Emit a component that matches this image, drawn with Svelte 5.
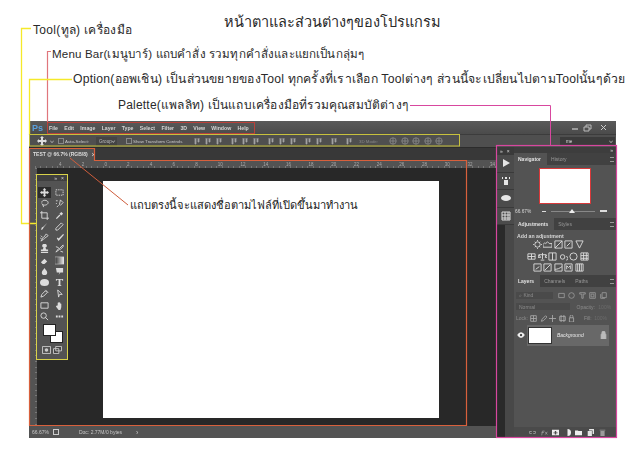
<script>
  const menus = ['File','Edit','Image','Layer','Type','Select','Filter','3D','View','Window','Help'];
  const rulerNums = [4,2,0,2,4,6,8,10,12,14,16,18,20,22,24,26,28,30,32,34];
  const tools = [
    {d:'M5 0l2 2H6v2h2V3l2 2-2 2V6H6v2h1l-2 2-2-2h1V6H2v1L0 5l2-2v1h2V2H3z',f:1},
    {d:'M1 2h8v6H1z',dash:1},
    {d:'M2 4c0-4 7-3 7 0s-6 4-7 1M3 6l1 3'},
    {d:'M6 1l3 3-3 3-1-1zM4 7L2 9M1 2h2M1 5h1',},
    {d:'M2 0v8h8M0 2h8v8'},
    {d:'M2 9l-1-1 4-4 1 1zM5 3l2-2 2 2-2 2z',f:1},
    {d:'M8 1L4 6l-1 2-2 1 1-3 2-1z',f:1},
    {d:'M7 1l2 2-6 6H1V7z'},
    {d:'M7 1l2 2-4 3-1-1zM1 9l2-3 1 1zM1 3l2 2M0 5l2 2'},
    {d:'M9 1L4 6 3 5 2 6l2 3 6-7z',f:1},
    {d:'M5 0a2 2 0 0 1 1 4l1 2h2v2H1V6h2l1-2a2 2 0 0 1 1-4zM1 9h8v1H1z',f:1},
    {d:'M9 1L5 5l1 1 3-3zM1 9l3-4 1 1zM1 3l3 1M6 8l3 1'},
    {d:'M1 7l4-4 3 3-3 3H3zM3 5l3 3',f:1},
    {d:'M0 1h10v8H0z',grad:1},
    {d:'M5 1c1 2 3 3 3 5a3 3 0 0 1-6 0c0-2 2-3 3-5z',f:1},
    {d:'M1 1h8v5H6L4 9 5 6H2z',f:1},
    {d:'M0 5a5 4 0 1 0 10 0a5 4 0 1 0-10 0z',f:1},
    {d:'M1 1h8v2H8V2H6v6h1v1H3V8h1V2H2v1H1z',f:1},
    {d:'M1 9l1-3 4-4 2 2-4 4zM6 1l3 3'},
    {d:'M3 1l5 5H5l-1 3z'},
    {d:'M1 2h8v6H1z'},
    {d:'M3 5V2h1v3-4h1v4-3h1v3-2h1v4l-1 3H4L1 6l1-1z',f:1},
    {d:'M4 1a3 3 0 1 1 0 6a3 3 0 1 1 0-6M6 6l3 3'},
    {d:'M1 4h2v2H1zM4 4h2v2H4zM7 4h2v2H7z',f:1}
  ];
  const adjust = [
    [ 'M5 2a3 3 0 1 1 0 6a3 3 0 1 1 0-6M5 0v1M5 9v1M0 5h1M9 5h1M2 2l1 1M7 7l1 1M8 2L7 3M2 8l1-1',
      'M0 8V5l2-2 1 1 2-2 2 2 3 0v4z','M1 1h8v8H1zM1 9l8-8','M1 1h8v8H1zM3 7l4-4','M1 1h8L5 9z' ],
    [ 'M1 2h8v6H1zM5 2v6M1 5h8','M5 1v7M1 3h8M1 3l-1 3h3zM9 3l-1 3h3zM3 9h4','M1 1h8v8H1zM5 1v8','M4 3a2.500 2.500 0 1 1 0 5a2.500 2.500 0 1 1 0-5M8 5a1.500 1.500 0 1 1 0 4','M5 1a4 4 0 1 1 0 8a4 4 0 1 1 0-8','M1 1h8v8H1zM1 4h8M1 7h8M4 1v8M7 1v8' ],
    [ 'M1 1h8v8H1zM3 7l4-3','M1 1h8v8H1zM2 8l6-6','M1 1h8v8H1zM1 7c3 0 5-1 8-3','M1 1h8v8H1zM3 7V3l2 2 2-2v4','M1 1h8v8H1zM3 1v8M5 1v8M7 1v8' ]
  ];
  const optIconsA = [0,1,2,3,4,5,6,7,8,9,10,11,12];
  const gapAt = [3,6,9,11,12];
  const opt3d = [394,406,418,430,441];
  const rails = ['M2 1l7 4-7 4z','M4 1h2v2H4zM3 4h4v5H3zM1 1h1v2H1zM8 1h1v2H8z','M0 5a5 3 0 1 0 10 0a5 3 0 1 0-10 0z','M1 1h8v8H1zM1 4h8M1 7h8M4 1v8M7 1v8'];
  const layerTools = ['M1 2h8v6H1z','M5 1a4 4 0 1 1 0 8a4 4 0 1 1 0-8z','M1 1h8v2H6v6H4V3H1z','M1 1h8v8H1zM3 3h4v4H3z','M3 1h6v7H3zM1 3v6h6'];
  const lockTools = ['M1 1h8v8H1zM1 5h8M5 1v8','M8 1L3 6 2 9l3-1 5-5z','M5 0v10M0 5h10','M1 2h8v6H1zM3 0v10M7 0v10','M2 4h6v6H2zM3 4V2a2 2 0 0 1 4 0v2'];
  const footer = [
    {d:'M0 5a2 2 0 0 1 2-2h2v1H2a1 1 0 0 0 0 2h2v1H2a2 2 0 0 1-2-2zM10 5a2 2 0 0 0-2-2H6v1h2a1 1 0 0 1 0 2H6v1h2a2 2 0 0 0 2-2z',o:.55},
    {d:'M1 9l1-6h3M1 5h3M6 4l3 4M9 4L6 8',o:.55,line:1},
    {d:'M0 1h10v8H0zM4 3v2H2v1h2v2h2V6h2V5H6V3z',o:1},
    {d:'M5 0a5 5 0 1 1 0 10V0z',o:1},
    {d:'M0 2h4l1 1h5v6H0z',o:1},
    {d:'M1 3h6v7H1zM3 0h7v7H8V2H3z',o:.95},
    {d:'M2 3h6v7H2zM1 1h8v1H1z',o:.5}
  ];
</script>

<main class="page">
  <h1 class="note title">หน้าตาและส่วนต่างๆของโปรแกรม</h1>
  <p class="note tool-note">Tool(ทูล) เครื่องมือ</p>
  <p class="note menu-note">Menu Bar(เมนูบาร์) แถบคำสั่ง รวมทุกคำสั่งและแยกเป็นกลุ่มๆ</p>
  <p class="note option-note">Option(ออพเชิน) เป็นส่วนขยายของTool ทุกครั้งที่เราเลือก Toolต่างๆ ส่วนนี้จะเปลี่ยนไปตามToolนั้นๆด้วย</p>
  <p class="note palette-note">Palette(แพลลิท) เป็นแถบเครื่องมือที่รวมคุณสมบัติต่างๆ</p>

  <section class="window">
    <div class="menubar">
      <b class="ps">Ps</b>
      <nav class="menus">{#each menus as m}<span>{m}</span>{/each}</nav>
      <div class="winctl">
        <svg width="40" height="8" viewBox="0 0 40 8"><path d="M2 5h6" stroke="#ccc" stroke-width="1.200"/><path d="M14 3h5v4h-5zM16 3V1h5v4h-2" fill="none" stroke="#bbb"/><path d="M31 1l5 5M36 1l-5 5" stroke="#ccc"/></svg>
      </div>
    </div>

    <div class="options">
      <svg class="mv" width="10" height="10" viewBox="0 0 10 10"><path fill="#ddd" d={tools[0].d}/></svg>
      <span class="caret"></span>
      <i class="check"></i><span class="otext auto">Auto-Select:</span>
      <span class="select group">Group<span class="caret"></span></span>
      <i class="check"></i><span class="otext show">Show Transform Controls</span>
      <div class="align">
        {#each optIconsA as i}
          <svg width="6" height="7" viewBox="0 0 6 7" class:gap={gapAt.includes(i)}><path d="M0 0h6M1 1h1v5H1zM4 1h1v3H4z" stroke="#aaa" stroke-width=".7" fill="#999"/></svg>
        {/each}
      </div>
      <span class="otext mode">3D Mode:</span>
      <div class="modes">
        {#each opt3d as _}
          <svg width="8" height="8" viewBox="0 0 10 10"><path d="M5 1a4 4 0 1 1 0 8a4 4 0 1 1 0-8M1 5h8M5 1v8" fill="none" stroke="#8d8d8d"/></svg>
        {/each}
      </div>
      <span class="select workspace">me<span class="caret"></span></span>
    </div>

    <div class="body">
      <div class="doc">
        <div class="tabbar"><span class="tab">TEST @ 66.7% (RGB/8)<em>×</em></span></div>
        <div class="ruler-top">
          {#each rulerNums as n}<span>{n}</span>{/each}
        </div>
        <div class="doc-mid">
          <div class="ruler-left"></div>
          <div class="canvas"><div class="sheet"></div></div>
          <aside class="toolbox">
            <div class="tb-head"><span>»</span><span>×</span></div>
            <div class="tb-grid">
              {#each tools as t, i}
                <span class="tool" class:active={i === 0}>
                  <svg width="9" height="9" viewBox="0 0 10 10">
                    {#if t.grad}
                      <defs><linearGradient id="g"><stop offset="0" stop-color="#333"/><stop offset="1" stop-color="#eee"/></linearGradient></defs>
                      <path d={t.d} fill="url(#g)" stroke="#ccc" stroke-width=".6"/>
                    {:else if t.f}
                      <path d={t.d} fill="#dcdcdc"/>
                    {:else}
                      <path d={t.d} fill="none" stroke="#dcdcdc" stroke-width="1" stroke-dasharray={t.dash ? '1.500 1' : 'none'}/>
                    {/if}
                  </svg>
                </span>
              {/each}
            </div>
            <div class="swatches"><i class="fg"></i><i class="bg"></i></div>
            <div class="tb-bottom">
              <svg width="9" height="8" viewBox="0 0 10 9"><path d="M0.500 0.500h9v8h-9z" fill="none" stroke="#ccc"/><circle cx="5" cy="4.500" r="2" fill="#ccc"/></svg>
              <svg width="9" height="8" viewBox="0 0 10 9"><path d="M3 .5h6.500v5H3zM.5 3h6v5.500h-6z" fill="#444" stroke="#ccc"/></svg>
            </div>
          </aside>
        </div>
        <div class="status"><span>66.67%</span><span class="st-ico"></span><span class="st-doc">Doc: 2.77M/0 bytes</span><span class="st-arrow">›</span></div>
      </div>

      <div class="dock">
        <div class="rail">
          <div class="rail-head"><span>»</span><span>×</span></div>
          {#each rails as d, i}
            <span class="rail-btn">
              <svg width="10" height="10" viewBox="0 0 10 10"><path {d} fill={i === 3 ? 'none' : '#e6e6e6'} stroke={i === 3 ? '#ddd' : 'none'}/></svg>
            </span>
          {/each}
        </div>
        <div class="panels">
          <div class="panel-top"><span>»</span></div>
          <div class="tabs"><span class="on">Navigator</span><span>History</span><i class="burger"></i></div>
          <div class="navigator">
            <div class="preview"></div>
            <div class="zoomrow">
              <span class="pct">66.67%</span>
              <i class="minus"></i>
              <span class="slider"><i class="thumb"></i></span>
              <i class="plus"></i>
            </div>
          </div>
          <div class="tabs"><span class="on">Adjustments</span><span>Styles</span><i class="burger"></i></div>
          <div class="adjust">
            <div class="adj-title">Add an adjustment</div>
            {#each adjust as row}
              <div class="adj-row">
                {#each row as d}
                  <svg width="9" height="9" viewBox="0 0 10 10"><path {d} fill="none" stroke="#dedede" stroke-width="1"/></svg>
                {/each}
              </div>
            {/each}
          </div>
          <div class="tabs"><span class="on">Layers</span><span>Channels</span><span>Paths</span><i class="burger"></i></div>
          <div class="layers">
            <div class="lrow"><span class="field kind">⌕ Kind</span>
              {#each layerTools as d}<svg width="7" height="7" viewBox="0 0 10 10"><path {d} fill="none" stroke="#999" stroke-width="1.200"/></svg>{/each}
            </div>
            <div class="lrow"><span class="field normal">Normal</span><span class="dim">Opacity:</span><span class="dim faint">100%</span></div>
            <div class="lrow lockrow"><span class="dim">Lock:</span>
              {#each lockTools as d}<svg width="7" height="7" viewBox="0 0 10 10"><path {d} fill="none" stroke="#aaa" stroke-width="1.200"/></svg>{/each}
              <span class="dim fill">Fill:</span><span class="dim faint">100%</span>
            </div>
            <div class="layer">
              <span class="eye"><svg width="8" height="6" viewBox="0 0 10 8"><path d="M0 4c3-5 7-5 10 0c-3 5-7 5-10 0z" fill="#eee"/><circle cx="5" cy="4" r="1.500" fill="#333"/></svg></span>
              <div class="layer-body">
                <i class="thumbnail"></i>
                <span class="lname">Background</span>
                <svg width="7" height="8" viewBox="0 0 8 10"><path d="M1 4h6v6H1zM2 4V2a2 2 0 0 1 4 0v2" fill="#bbb" stroke="#bbb"/></svg>
              </div>
            </div>
            <div class="lfooter">
              {#each footer as f}
                <svg width="7" height="7" viewBox="0 0 10 10" style:opacity={f.o}><path d={f.d} fill={f.line ? 'none' : '#eee'} stroke={f.line ? '#eee' : 'none'}/></svg>
              {/each}
            </div>
          </div>
        </div>
      </div>
    </div>
  </section>

  <p class="note doc-note">แถบตรงนี้จะแสดงชื่อตามไฟล์ที่เปิดขึ้นมาทำงาน</p>

  <svg class="callouts" width="640" height="452" viewBox="0 0 640 452" fill="none">
    <path d="M31 28.500H21.500V223.500H36" stroke="#f5e92a" stroke-width="1.300"/>
    <path d="M51 51.500H47.500V122" stroke="#e0767c" stroke-width="1.200"/>
    <path d="M72 79.500H29.500V135" stroke="#f5e92a" stroke-width="1.300"/>
    <path d="M410 105.500H550.500V145" stroke="#d8479f"/>
    <rect x="47.500" y="122.500" width="207" height="11" stroke="#b9413a"/>
    <rect x="29.500" y="134.500" width="430" height="11.500" stroke="#c7c13d"/>
    <path d="M29.500 148.500H94.500V160.500H466.500V425.500H29.500Z" stroke="#d8603c" stroke-width="1.200"/>
    <rect x="36.500" y="174.500" width="31" height="185" stroke="#d8d24a"/>
    <rect x="496.500" y="145.500" width="120" height="292" stroke="#d8479f" stroke-width="1.200"/>
    <path d="M70 158L128 205" stroke="#cf5d3c"/>
  </svg>
</main>

<style>
  :global(body) { margin: 0; background: #fff; }
  .page {
    position: relative;
    width: 640px;
    height: 452px;
    overflow: hidden;
    background: #fff;
    font-family: "Liberation Sans", Arial, sans-serif;
    padding-top: 121px;
    box-sizing: border-box;
  }
  .note {
    position: absolute;
    margin: 0;
    color: #2a2a2a;
    font-weight: 400;
    white-space: nowrap;
    line-height: 1.2;
  }
  .title { left: 224px; top: 14px; font-size: 14.500px; }
  .tool-note { left: 33px; top: 23px; font-size: 12px; letter-spacing: .3px; }
  .menu-note { left: 52px; top: 47px; font-size: 11.600px; letter-spacing: .15px; }
  .option-note { left: 73px; top: 72px; font-size: 12.200px; letter-spacing: .23px; }
  .palette-note { left: 118px; top: 98px; font-size: 12px; letter-spacing: .2px; }
  .doc-note { left: 130px; top: 199px; font-size: 11.100px; color: #1c1c1c; }
  .callouts { position: absolute; left: 0; top: 0; pointer-events: none; }

  .window {
    margin-left: 29px;
    width: 587px;
    height: 317px;
    display: flex;
    flex-direction: column;
    background: #535353;
    color: #d8d8d8;
    font-size: 5.500px;
    filter: blur(.3px);
  }
  .menubar {
    height: 13px;
    display: flex;
    align-items: center;
    background: linear-gradient(#5a5a5a, #4b4b4b);
    padding-left: 3px;
  }
  .ps { color: #5aa0dc; font-size: 9px; width: 17px; }
  .menus { display: flex; gap: 6.300px; font-size: 5.200px; font-weight: 700; color: #d6d6d6; }
  .winctl { margin-left: auto; padding-right: 6px; display: flex; }

  .options {
    height: 13px;
    display: flex;
    align-items: center;
    background: #4f4f4f;
    border-top: 1px solid #3c3c3c;
    box-sizing: border-box;
    position: relative;
  }
  .mv { margin-left: 8px; }
  .caret {
    display: inline-block;
    width: 3px; height: 3px;
    border-right: 1px solid #aaa;
    border-bottom: 1px solid #aaa;
    transform: rotate(45deg) scale(.7);
    margin: 0 4px 1px 3px;
  }
  .check {
    width: 4px; height: 4px;
    border: 1px solid #888;
    margin-right: 1px;
    flex: none;
  }
  .otext { color: #c8c8c8; font-size: 4.400px; white-space: nowrap; }
  .auto { width: 31px; }
  .show { width: 48px; }
  .select {
    display: flex;
    align-items: center;
    justify-content: space-between;
    background: #444;
    height: 9px;
    padding-left: 3px;
    color: #bbb;
    box-sizing: border-box;
    font-size: 4.600px;
  }
  .group { width: 21px; margin-right: 9px; }
  .group .caret { margin: 0 2px 1px 0; }
  .align { display: flex; align-items: center; gap: 5px; margin-left: 13px; }
  .align .gap { margin-left: 4px; }
  .mode { margin-left: 7px; color: #888; width: 30px; }
  .modes { display: flex; gap: 3.500px; }
  .workspace { position: absolute; right: 1px; width: 55px; top: 2px; background: #3b3b3b; color: #ddd; padding-left: 6px; }
  .workspace .caret { margin: 0 2px 1px 0; }

  .body { flex: 1; display: flex; min-height: 0; }
  .doc { width: 467px; display: flex; flex-direction: column; background: #282828; }
  .tabbar { height: 13px; background: #383838; border-top: 1px solid #2c2c2c; box-sizing: border-box; display: flex; }
  .tab {
    width: 66px;
    background: #535353;
    font-weight: 700;
    font-size: 5px;
    display: flex;
    align-items: center;
    padding-left: 4px;
    box-sizing: border-box;
    white-space: nowrap;
    color: #ddd;
  }
  .tab em { font-style: normal; margin-left: 4px; font-size: 7px; font-weight: 400; }
  .ruler-top {
    height: 8px;
    display: flex;
    align-items: center;
    padding-left: 30px;
    font-size: 4.500px;
    color: #aaa;
    background:
      repeating-linear-gradient(90deg, #777 0 1px, transparent 1px 5.680px) 0 100% / 100% 2px no-repeat,
      #535353;
  }
  .ruler-top span { width: 22.700px; flex: none; }
  .doc-mid { flex: 1; display: flex; position: relative; min-height: 0; }
  .ruler-left {
    width: 8px;
    background:
      repeating-linear-gradient(#777 0 1px, transparent 1px 5.680px) 100% 0 / 2px 100% no-repeat,
      #535353;
  }
  .canvas { flex: 1; display: flex; padding: 13px 57px 8px 66px; }
  .sheet { flex: 1; background: #fff; }
  .toolbox {
    position: absolute;
    left: 8px; top: 7px;
    width: 30px;
    height: 184px;
    background: #535353;
    display: flex;
    flex-direction: column;
    box-sizing: border-box;
  }
  .tb-head {
    height: 6px;
    background: #3f3f3f;
    display: flex;
    justify-content: flex-end;
    align-items: center;
    gap: 4px;
    padding-right: 3px;
    font-size: 5px;
  }
  .tb-grid {
    display: grid;
    grid-template-columns: repeat(2, 15px);
    grid-auto-rows: 11.250px;
    padding-top: 6px;
    justify-items: center;
    align-items: center;
  }
  .tool { width: 13px; height: 11px; display: flex; align-items: center; justify-content: center; }
  .tool.active { background: #2c2c2c; }
  .swatches { position: relative; height: 18px; margin: 3px 0 0 7px; }
  .swatches i { position: absolute; display: block; width: 11px; height: 10px; background: #fff; box-shadow: 0 0 0 1px #222; }
  .fg { left: 0; top: 0; z-index: 1; }
  .bg { left: 7px; top: 7px; }
  .tb-bottom { display: flex; justify-content: space-between; padding: 3px 5px 0; }

  .status {
    height: 12px;
    background: #535353;
    display: flex;
    align-items: center;
    padding-left: 3px;
    color: #c8c8c8;
    font-size: 5px;
  }
  .st-ico { width: 4px; height: 4px; border: 1px solid #ccc; margin-left: 4px; }
  .st-doc { margin-left: 20px; width: 56px; white-space: nowrap; }
  .st-arrow { margin-left: 1px; font-size: 7px; }

  .dock { width: 120px; display: flex; background: #3d3d3d; }
  .rail {
    width: 18px;
    flex: none;
    padding-left: 1px;
    box-sizing: border-box;
    display: flex;
    flex-direction: column;
    background: linear-gradient(90deg, #2a2a2a 0 9px, #484848 9px 100%);
  }
  .rail-head { height: 8px; background: #3a3a3a; font-size: 5px; display: flex; gap: 4px; padding-left: 3px; align-items: center; }
  .rail-btn {
    height: 17.500px;
    background: #4b4b4b;
    border-bottom: 1px solid #3a3a3a;
    box-sizing: border-box;
    display: flex;
    align-items: center;
    justify-content: center;
  }
  .panels { flex: 1; display: flex; flex-direction: column; background: #535353; }
  .panel-top { height: 6px; background: #3d3d3d; font-size: 5px; display: flex; justify-content: flex-end; align-items: center; padding-right: 3px; }
  .tabs {
    height: 12px;
    flex: none;
    background: #414141;
    display: flex;
    align-items: stretch;
    font-size: 5px;
    color: #999;
    position: relative;
  }
  .tabs span { padding: 0 6px 0 4px; display: flex; align-items: center; }
  .tabs .on { background: #535353; color: #e2e2e2; font-weight: 700; }
  .burger {
    position: absolute;
    right: 2px; top: 4px;
    width: 4px; height: 3px;
    border-top: 1px solid #999;
    border-bottom: 1px solid #999;
  }
  .navigator { height: 53px; flex: none; position: relative; box-sizing: border-box; padding-top: 3px; }
  .preview { width: 50px; height: 34px; margin-left: 25px; background: #fff; border: 1px solid #d8393a; }
  .zoomrow { display: flex; align-items: center; height: 8px; margin-top: 3px; padding-left: 1px; font-size: 4.800px; }
  .pct { width: 27px; }
  .minus { width: 4px; height: 1px; background: #ddd; }
  .slider { width: 44px; height: 1px; background: #888; margin: 0 5px; position: relative; }
  .thumb {
    position: absolute; left: 18px; top: -2px;
    border: 3px solid transparent;
    border-bottom: 4px solid #eee;
    border-top: 0;
  }
  .plus { width: 7px; height: 2px; background: #ddd; }
  .adjust { height: 45px; flex: none; }
  .adj-title { padding: 3px 0 0 3px; height: 6px; line-height: 6px; font-size: 5.200px; font-weight: 700; color: #d6d6d6; }
  .adj-row { display: flex; justify-content: center; gap: 1.500px; height: 11.500px; align-items: center; padding-right: 14px; }
  .layers { flex: 1; display: flex; flex-direction: column; min-height: 0; color: #8c8c8c; font-size: 5px; padding-top: 3px; }
  .lrow { height: 11.300px; display: flex; align-items: center; gap: 3.500px; padding-left: 2px; flex: none; }
  .field { background: #4a4a4a; height: 7px; display: flex; align-items: center; padding-left: 3px; box-sizing: border-box; }
  .kind { width: 37px; margin-right: 1px; }
  .normal { width: 54px; margin-right: 3px; }
  .lockrow { gap: 2.500px; }
  .fill { margin-left: 6px; }
  .faint { color: #6c6c6c; }
  .layer { display: flex; height: 21px; margin-top: 1px; flex: none; }
  .eye { width: 13px; display: flex; align-items: center; justify-content: center; }
  .layer-body { width: 82px; background: #686868; display: flex; align-items: center; padding-left: 1px; box-sizing: border-box; }
  .thumbnail { width: 24px; height: 17px; background: #fff; border: 1px solid #333; box-sizing: border-box; flex: none; }
  .lname { font-style: italic; color: #e8e8e8; width: 43px; margin-left: 5px; }
  .lfooter {
    margin-top: auto;
    height: 11px;
    background: #4a4a4a;
    display: flex;
    align-items: center;
    gap: 4.600px;
    padding-left: 15px;
  }
</style>
